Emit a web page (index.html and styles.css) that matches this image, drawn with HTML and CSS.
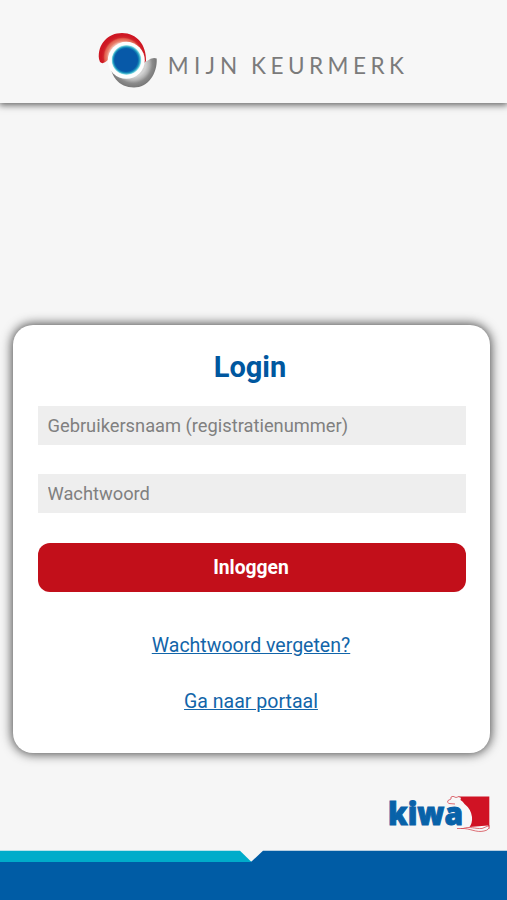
FILE: index.html
```html
<!DOCTYPE html>
<html lang="nl">
<head>
<meta charset="utf-8">
<meta name="viewport" content="width=device-width, initial-scale=1">
<title>Mijn Keurmerk</title>
<link rel="stylesheet" href="styles.css">
</head>
<body>
<header class="header">
  <svg class="brand" viewBox="90 22 330 74" role="img" aria-label="Mijn Keurmerk">
    <defs>
      <radialGradient id="red" gradientUnits="userSpaceOnUse" cx="123" cy="57" r="24">
        <stop offset="0.6" stop-color="#f3b5a7"/><stop offset="0.68" stop-color="#e87c69"/><stop offset="0.76" stop-color="#e3604f"/><stop offset="0.82" stop-color="#d1262b"/><stop offset="0.9" stop-color="#ce1723"/>
      </radialGradient>
      <radialGradient id="grey" gradientUnits="userSpaceOnUse" cx="133" cy="64" r="23.500">
        <stop offset="0.55" stop-color="#d2d2d2"/><stop offset="0.7" stop-color="#b2b2b2"/><stop offset="0.82" stop-color="#8b8b8b"/><stop offset="1" stop-color="#777"/>
      </radialGradient>
      <radialGradient id="eye" gradientUnits="userSpaceOnUse" cx="126.500" cy="60" r="15" fx="124.800">
        <stop offset="0.76" stop-color="#0759a8"/><stop offset="0.86" stop-color="#168db9"/><stop offset="0.95" stop-color="#6ed1dc"/><stop offset="1" stop-color="#d5f3f4"/>
      </radialGradient>
    </defs>
    <path fill="url(#grey)" d="M110 58C109 76 119 87.500 134 87.500C148 87.500 157.500 74 156.700 58.500Q152 57 147 61Z"/>
    <path fill="url(#red)" d="M99 59C97.500 44 108 33 122 33C137 33 146.500 45 146 61L143 64L108 60Q103 65 100 62Z"/>
    <circle cx="126.300" cy="60.300" r="18.500" fill="#fdfdfd"/>
    <circle cx="126.500" cy="60" r="15" fill="url(#eye)"/>
    <text class="brand-text" x="167.800" y="73.500" textLength="69.500">MIJN</text>
    <text class="brand-text" x="251" y="73.500" textLength="153">KEURMERK</text>
  </svg>
</header>
<main class="main">
  <form class="card">
    <h1 class="title">Login</h1>
    <input class="field" type="text" placeholder="Gebruikersnaam (registratienummer)">
    <input class="field" type="password" placeholder="Wachtwoord">
    <button class="submit" type="button">Inloggen</button>
    <nav class="links">
      <a href="#">Wachtwoord vergeten?</a>
      <a href="#">Ga naar portaal</a>
    </nav>
  </form>
</main>
<div class="partner">
  <svg class="kiwa" viewBox="386 790 108 46" role="img" aria-label="Kiwa">
    <path fill="#d01324" d="M458 796.500H489.300V829H468Z"/>
    <path fill="#f7f7f7" d="M446.500 801.500L450 799.500L451 796.700Q454 795 456 797.300Q459 796 461 797.500L460.500 800Q463 801.500 464.500 804Q471 809 472 817Q472.500 823 469.500 827L488 825.500Q491 829.500 486 831.500Q475 833 462 829L457 829L459 825.500V813Q460 806 456 804.500L447.500 803.500Z"/>
    <text class="kiwa-text" x="388" y="825" textLength="75" lengthAdjust="spacingAndGlyphs">kiwa</text>
    <path class="beaver-line" d="M455 804L449 803.500Q446.500 802.500 448 800.500L451 799Q450 796.500 453 796.300L456 797.500Q459 795.700 461 797.700M457 828.500H463C470 826 475 829 482 828.500L488 826M461 828.500C470 828 476 833 484 831Q490 830 489 825"/>
  </svg>
</div>
<footer class="footer">
  <svg class="wave" viewBox="0 0 507 50" preserveAspectRatio="none" aria-hidden="true">
    <path fill="#005ca5" d="M0 11.500H251.500L263 .8H507V50H0Z"/>
    <path fill="#00acca" d="M0 .8H240L251.500 12H0Z"/>
  </svg>
</footer>
</body>
</html>
```
FILE: styles.css
```css
* { box-sizing: border-box; }

body {
  margin: 0;
  height: 900px;
  display: flex;
  flex-direction: column;
  overflow: hidden;
  background: #f6f6f6;
  font-family: Roboto, sans-serif;
}

.header {
  height: 103px;
  flex: none;
  padding: 22px 0 0 90px;
  background: #f7f7f7;
  box-shadow: 0 1px 7px 1px rgba(0, 0, 0, .62);
}

.brand { display: block; width: 330px; height: 74px; }

.brand-text {
  font-family: Lato, sans-serif;
  font-size: 22.500px;
  fill: #7b7b7b;
}

.main { padding: 222px 17px 0 13px; }

.card {
  display: flex;
  flex-direction: column;
  height: 428px;
  padding: 24px 24.500px 0 24.500px;
  border-radius: 20px;
  background: #fff;
  box-shadow: 0 0 11px 1px rgba(0, 0, 0, .72);
}

.title {
  margin: 0 3px 21px 0;
  font-size: 29px;
  line-height: 36px;
  font-weight: 700;
  text-align: center;
  color: #00579f;
}

.field {
  width: 100%;
  height: 39px;
  margin: 0 0 29.400px;
  padding: 0 10px;
  border: 0;
  border-radius: 0;
  background: #eee;
  font: 18.300px Roboto, sans-serif;
  color: #333;
}

.field::placeholder { color: #808080; opacity: 1; }

.submit {
  height: 49px;
  flex: none;
  padding: 1px 1px 0 0;
  border: 0;
  border-radius: 12px;
  background: #c20f1a;
  color: #fff;
  font: 700 19.300px Roboto, sans-serif;
}

.links {
  display: flex;
  flex-direction: column;
  align-items: center;
  gap: 32px;
  margin: 42px 1px 0 0;
}

.links a {
  font-size: 19.550px;
  line-height: 24px;
  color: #1265a9;
}

.partner {
  display: flex;
  justify-content: flex-end;
  padding: 37px 13px 0 0;
}

.kiwa { display: block; width: 108px; height: 46px; }

.kiwa-text {
  font: 800 31.500px "Open Sans", sans-serif;
  fill: #0862a9;
  stroke: #0862a9;
  stroke-width: 1px;
}

.beaver-line { fill: none; stroke: #d44a53; stroke-width: .8px; }

.footer { height: 50px; margin-top: auto; }

.wave { display: block; width: 100%; height: 50px; }
```
